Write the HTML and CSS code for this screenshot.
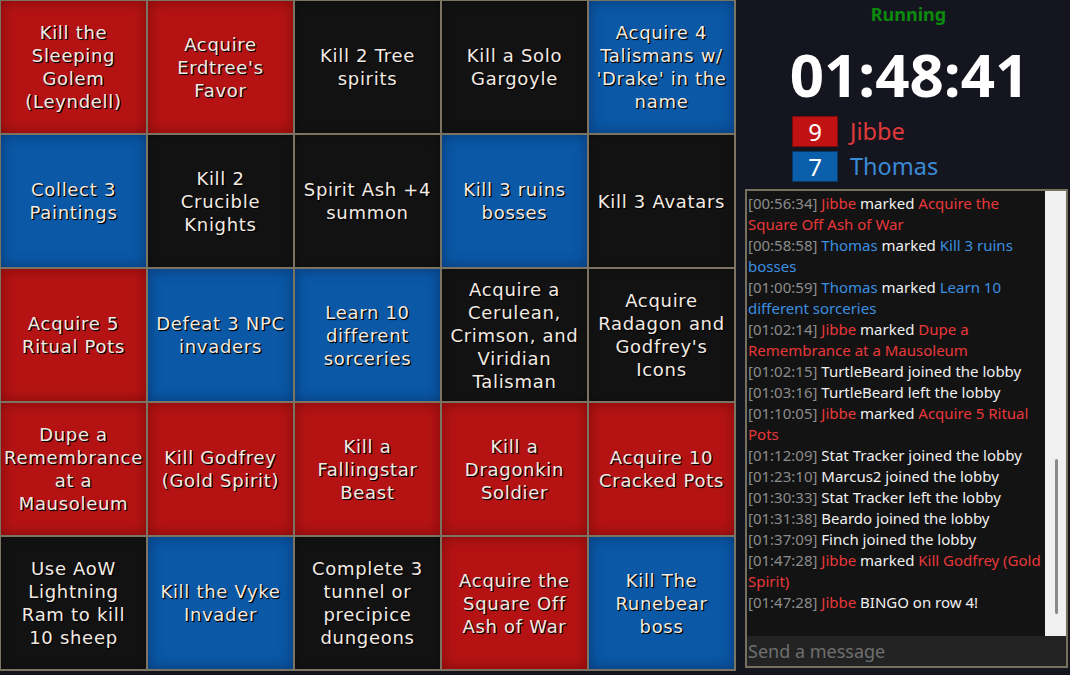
FILE: index.html
```html
<!DOCTYPE html>
<html>
<head>
<meta charset="utf-8">
<link rel="stylesheet" href="styles.css">
</head>
<body>
<div class="page">
  <div class="board">
    <div class="cell red"><span>Kill the Sleeping Golem (Leyndell)</span></div>
    <div class="cell red"><span>Acquire Erdtree's Favor</span></div>
    <div class="cell black"><span>Kill 2 Tree spirits</span></div>
    <div class="cell black"><span>Kill a Solo Gargoyle</span></div>
    <div class="cell blue"><span>Acquire 4 Talismans w/ 'Drake' in the name</span></div>

    <div class="cell blue"><span>Collect 3 Paintings</span></div>
    <div class="cell black"><span>Kill 2 Crucible Knights</span></div>
    <div class="cell black"><span>Spirit Ash +4 summon</span></div>
    <div class="cell blue"><span>Kill 3 ruins bosses</span></div>
    <div class="cell black"><span>Kill 3 Avatars</span></div>

    <div class="cell red"><span>Acquire 5 Ritual Pots</span></div>
    <div class="cell blue"><span>Defeat 3 NPC invaders</span></div>
    <div class="cell blue"><span>Learn 10 different sorceries</span></div>
    <div class="cell black"><span>Acquire a Cerulean, Crimson, and Viridian Talisman</span></div>
    <div class="cell black"><span>Acquire Radagon and Godfrey's Icons</span></div>

    <div class="cell red"><span>Dupe a Remembrance at a Mausoleum</span></div>
    <div class="cell red"><span>Kill Godfrey (Gold Spirit)</span></div>
    <div class="cell red"><span>Kill a Fallingstar Beast</span></div>
    <div class="cell red"><span>Kill a Dragonkin Soldier</span></div>
    <div class="cell red"><span>Acquire 10 Cracked Pots</span></div>

    <div class="cell black"><span>Use AoW Lightning Ram to kill 10 sheep</span></div>
    <div class="cell blue"><span>Kill the Vyke Invader</span></div>
    <div class="cell black"><span>Complete 3 tunnel or precipice dungeons</span></div>
    <div class="cell red"><span>Acquire the Square Off Ash of War</span></div>
    <div class="cell blue"><span>Kill The Runebear boss</span></div>
  </div>

  <div class="side">
    <div class="status">Running</div>
    <div class="timer">01:48:41</div>
    <div class="scores">
      <div class="score-row">
        <div class="score-box red-box">9</div>
        <div class="player p-red">Jibbe</div>
      </div>
      <div class="score-row">
        <div class="score-box blue-box">7</div>
        <div class="player p-blue">Thomas</div>
      </div>
    </div>
    <div class="chat">
      <div class="chat-main">
        <div class="log">
          <p class="msg"><span class="ts">[00:56:34]</span> <span class="r">Jibbe</span> marked <span class="r">Acquire the Square Off Ash of War</span></p>
          <p class="msg"><span class="ts">[00:58:58]</span> <span class="b">Thomas</span> marked <span class="b">Kill 3 ruins bosses</span></p>
          <p class="msg"><span class="ts">[01:00:59]</span> <span class="b">Thomas</span> marked <span class="b">Learn 10 different sorceries</span></p>
          <p class="msg"><span class="ts">[01:02:14]</span> <span class="r">Jibbe</span> marked <span class="r">Dupe a Remembrance at a Mausoleum</span></p>
          <p class="msg"><span class="ts">[01:02:15]</span> TurtleBeard joined the lobby</p>
          <p class="msg"><span class="ts">[01:03:16]</span> TurtleBeard left the lobby</p>
          <p class="msg"><span class="ts">[01:10:05]</span> <span class="r">Jibbe</span> marked <span class="r">Acquire 5 Ritual Pots</span></p>
          <p class="msg"><span class="ts">[01:12:09]</span> Stat Tracker joined the lobby</p>
          <p class="msg"><span class="ts">[01:23:10]</span> Marcus2 joined the lobby</p>
          <p class="msg"><span class="ts">[01:30:33]</span> Stat Tracker left the lobby</p>
          <p class="msg"><span class="ts">[01:31:38]</span> Beardo joined the lobby</p>
          <p class="msg"><span class="ts">[01:37:09]</span> Finch joined the lobby</p>
          <p class="msg"><span class="ts">[01:47:28]</span> <span class="r">Jibbe</span> marked <span class="r">Kill Godfrey (Gold Spirit)</span></p>
          <p class="msg"><span class="ts">[01:47:28]</span> <span class="r">Jibbe</span> BINGO on row 4!</p>
        </div>
        <div class="scrollbar"><div class="thumb"></div></div>
      </div>
      <div class="chat-input">Send a message</div>
    </div>
  </div>
</div>
</body>
</html>
```
FILE: styles.css
```css
* { box-sizing: border-box; }
html, body { margin: 0; padding: 0; }
body {
  background: #151520;
  width: 1070px;
  height: 675px;
  overflow: hidden;
}
.page {
  display: flex;
  align-items: flex-start;
}
.board {
  width: 736px;
  height: 671px;
  background: #7c7462;
  padding: 1px;
  display: grid;
  grid-template-columns: repeat(5, 145px);
  grid-template-rows: repeat(5, 132px);
  gap: 2px;
  flex: none;
}
.cell {
  display: flex;
  align-items: center;
  justify-content: center;
  text-align: center;
  padding: 0 7px;
  font-family: "DejaVu Sans", sans-serif;
  font-size: 18px;
  letter-spacing: 0.7px;
  line-height: 23px;
  color: #f3ebe3;
  text-shadow: 1px 1px 1px #000, 1px 1px 0 #000;
}
.red {
  background: #b51313;
  box-shadow: inset 0 0 14px rgba(60, 0, 0, 0.45);
}
.blue {
  background: #0a58a6;
  box-shadow: inset 0 0 14px rgba(0, 20, 60, 0.45);
}
.black {
  background: #121212;
  box-shadow: inset 0 0 10px rgba(0, 0, 0, 0.3);
}

.side {
  flex: 1;
  padding: 3px 2px 0 9px;
  display: flex;
  flex-direction: column;
}
.status {
  text-align: center;
  font-family: "Noto Sans", sans-serif;
  font-weight: bold;
  font-size: 18px;
  line-height: 22px;
  color: #0c8a0c;
  padding-left: 4px;
}
.timer {
  margin-top: 14px;
  height: 70px;
  text-align: center;
  font-family: "Noto Sans", sans-serif;
  font-weight: bold;
  font-size: 60px;
  line-height: 70px;
  color: #ffffff;
  padding-left: 6px;
}
.scores {
  margin-top: 7px;
  padding-left: 47px;
  display: flex;
  flex-direction: column;
  gap: 4px;
}
.score-row {
  display: flex;
  align-items: center;
  gap: 12px;
  height: 31px;
}
.score-box {
  width: 46px;
  height: 31px;
  display: flex;
  align-items: center;
  justify-content: center;
  font-family: "Noto Sans", sans-serif;
  font-size: 24px;
  color: #ffffff;
}
.red-box { background: #c01212; border: 1px solid #7a0b0b; }
.blue-box { background: #0a5eaa; border: 1px solid #08386a; }
.player {
  font-family: "Noto Sans", sans-serif;
  font-size: 23.5px;
  line-height: 31px;
}
.p-red { color: #e0393a; }
.p-blue { color: #3a8bd6; }

.chat {
  margin-top: 7px;
  height: 479px;
  border: 2px solid #77705f;
  display: flex;
  flex-direction: column;
}
.chat-main {
  flex: 1;
  display: flex;
  min-height: 0;
  background: #131313;
}
.log {
  flex: 1;
  overflow: hidden;
  padding: 2px 0 0 1px;
  font-family: "Noto Sans", sans-serif;
  font-size: 15px;
  line-height: 21px;
  color: #f0f0f0;
}
.msg { margin: 0; }
.ts { color: #8c8c8c; }
.r { color: #e8383a; }
.b { color: #3b8fe0; }
.scrollbar {
  width: 21px;
  background: #f0f0f0;
  padding-top: 268px;
  display: flex;
  justify-content: center;
}
.thumb {
  width: 3px;
  height: 155px;
  background: #8a8a8a;
  border-radius: 2px;
  margin-left: 1px;
}
.chat-input {
  height: 30px;
  background: #232323;
  font-family: "Noto Sans", sans-serif;
  font-size: 18px;
  line-height: 30px;
  color: #6f6f6f;
  padding-left: 1px;
}
```
